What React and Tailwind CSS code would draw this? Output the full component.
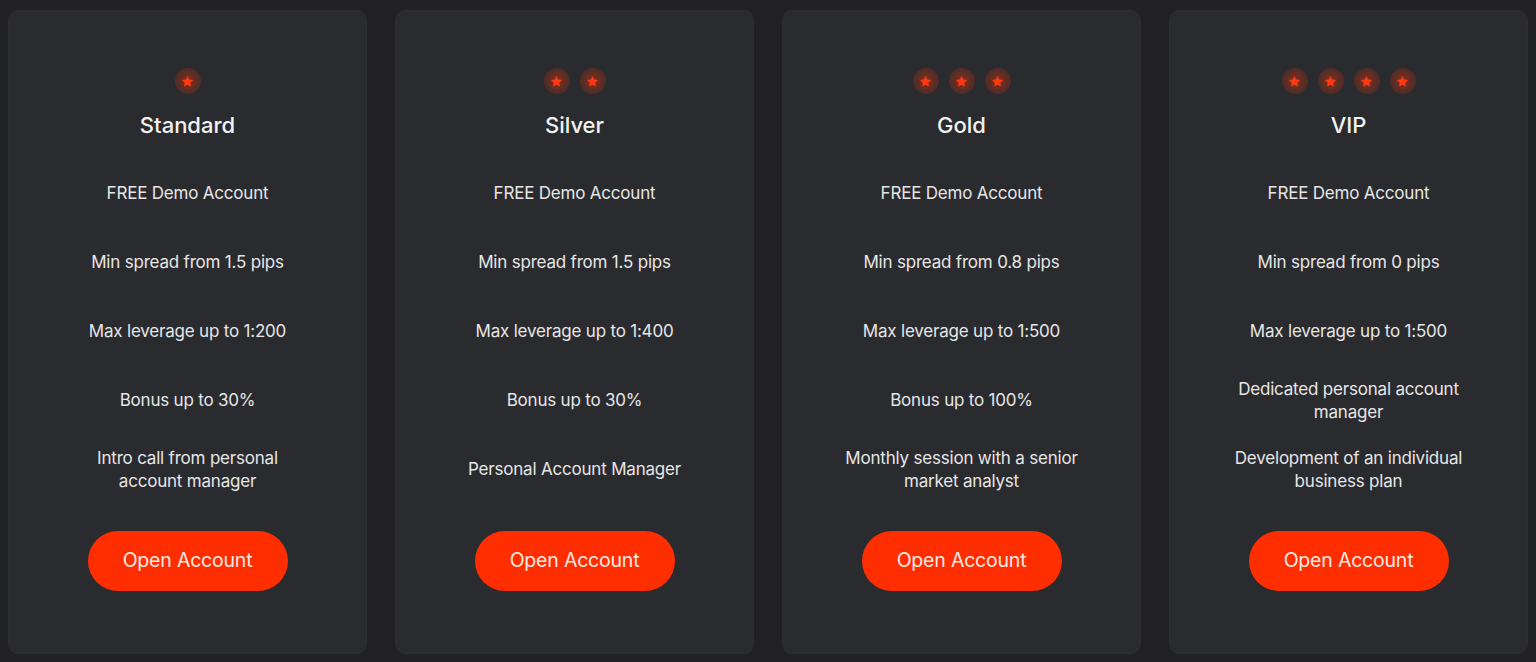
const plans = [
  {
    name: "Standard",
    stars: 1,
    features: [
      "FREE Demo Account",
      "Min spread from 1.5 pips",
      "Max leverage up to 1:200",
      "Bonus up to 30%",
      "Intro call from personal account manager",
    ],
  },
  {
    name: "Silver",
    stars: 2,
    features: [
      "FREE Demo Account",
      "Min spread from 1.5 pips",
      "Max leverage up to 1:400",
      "Bonus up to 30%",
      "Personal Account Manager",
    ],
  },
  {
    name: "Gold",
    stars: 3,
    features: [
      "FREE Demo Account",
      "Min spread from 0.8 pips",
      "Max leverage up to 1:500",
      "Bonus up to 100%",
      "Monthly session with a senior market analyst",
    ],
  },
  {
    name: "VIP",
    stars: 4,
    features: [
      "FREE Demo Account",
      "Min spread from 0 pips",
      "Max leverage up to 1:500",
      "Dedicated personal account manager",
      "Development of an individual business plan",
    ],
  },
];

function Star() {
  return (
    <div className="flex h-[26px] w-[26px] items-center justify-center rounded-full bg-[radial-gradient(circle,rgba(255,51,0,0.45)_0%,rgba(255,51,0,0.22)_55%,rgba(255,51,0,0.06)_100%)]">
      <svg width="13" height="13" viewBox="0 0 24 24" fill="#ff3a12">
        <path d="M12 1.8l3.1 6.6 7.2.9-5.3 5 1.4 7.1L12 17.9l-6.4 3.5 1.4-7.1-5.3-5 7.2-.9z" />
      </svg>
    </div>
  );
}

export default function App() {
  return (
    <div className="h-[662px] w-full bg-[#212125] px-[8px] pb-[8px] pt-[10px] font-['Inter',sans-serif]">
      <div className="grid h-full grid-cols-4 gap-[28px]">
        {plans.map((plan) => (
          <article
            key={plan.name}
            className="flex flex-col items-center rounded-[10px] border border-[#2d2e32] bg-[#2a2b2f] pt-[57px]"
          >
            <div className="flex gap-[10px]">
              {Array.from({ length: plan.stars }).map((_, i) => (
                <Star key={i} />
              ))}
            </div>
            <h2 className="mt-[17px] text-[22px] font-medium leading-[28px] text-[#f2f2f2]">
              {plan.name}
            </h2>
            <ul className="mt-[20px] w-full px-[56px]">
              {plan.features.map((f) => (
                <li
                  key={f}
                  className="flex h-[69px] items-center justify-center text-center text-[17px] leading-[23px] tracking-[-0.2px] text-[#e6e6e6]"
                >
                  {f}
                </li>
              ))}
            </ul>
            <button className="mt-[27px] h-[60px] w-[200px] rounded-full bg-[#ff2e00] text-[19.5px] tracking-[-0.2px] text-[#fbe9e4]">
              Open Account
            </button>
          </article>
        ))}
      </div>
    </div>
  );
}
